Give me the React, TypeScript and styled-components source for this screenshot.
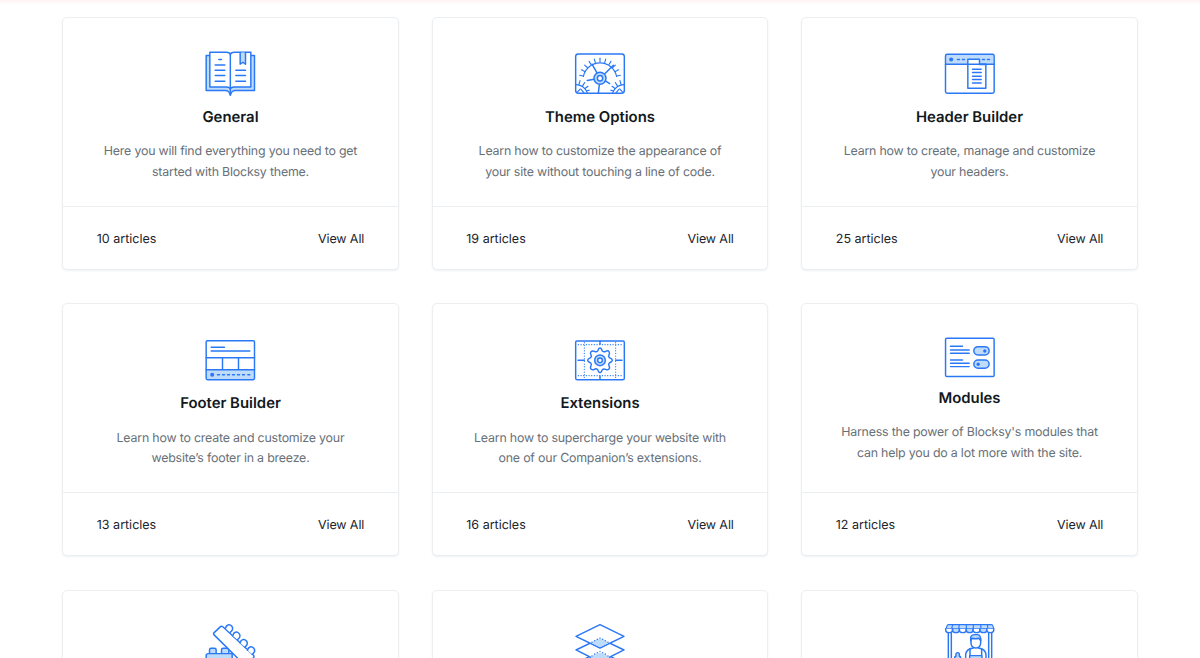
import React from "react";
import styled, { createGlobalStyle } from "styled-components";

const Global = createGlobalStyle`
  *, *::before, *::after { box-sizing: border-box; }
  body {
    margin: 0;
    background: #fff;
    font-family: Inter, "Liberation Sans", sans-serif;
    text-rendering: geometricPrecision;
    overflow: hidden;
  }
`;

const Page = styled.main`
  height: 658px;
  overflow: hidden;
  background: linear-gradient(180deg, #fff2f4 0, #fff7f9 2px, #fff 4px);
  padding: 17px 62.4px 0;
`;

const Grid = styled.div`
  display: grid;
  grid-template-columns: repeat(3, 1fr);
  grid-auto-rows: 253px;
  gap: 33.3px;
`;

const Card = styled.article`
  display: flex;
  flex-direction: column;
  background: #fff;
  border: 1px solid #eceff2;
  border-radius: 5px;
  box-shadow: 0 1px 2px rgba(40, 60, 90, 0.08);
`;

const CardBody = styled.div`
  flex: 1;
  display: flex;
  flex-direction: column;
  align-items: center;
  padding-top: 33px;
  text-align: center;
`;

const Icon = styled.svg`
  display: block;
  flex: none;
  overflow: visible;
  fill: none;
  stroke: #2a78f5;
  stroke-width: 4.4;
  stroke-linecap: round;
  stroke-linejoin: round;

  .tint { fill: #bfdbfa; }
  .paper { fill: #fff; }
  .dot { fill: #2a78f5; stroke: none; }
  .soft { stroke: none; fill: #bfdbfa; }
  .fine { stroke-width: 3.4; }
`;

const Title = styled.h2`
  margin: 9.8px 0 0;
  font-size: 14.9px;
  line-height: 20px;
  font-weight: 600;
  letter-spacing: 0;
  color: #111820;
`;

const Description = styled.p`
  margin: 14.5px 0 0;
  font-size: 12.4px;
  line-height: 20.4px;
  letter-spacing: -0.2px;
  color: #687078;
  white-space: pre-line;
`;

const CardFooter = styled.footer`
  display: flex;
  align-items: center;
  justify-content: space-between;
  height: 63px;
  padding: 2px 33.4px 0;
  border-top: 1px solid #eceff2;
  font-size: 12.5px;
  color: #1b232b;
`;

const Count = styled.span``;
const ViewAll = styled.a`
  letter-spacing: -0.12px;
  cursor: pointer;
`;

const BookIcon = () => (
  <Icon width="52" height="46" viewBox="42.5 33.3 156 138">
    <path className="tint" d="M60 47H49v105h57c9 0 12 3 15.500 14 3.500-11 6.500-14 15.500-14h57V47h-11" />
    <path className="paper" d="M60 37h49c8 0 12 3 12.500 8 .5-5 4.500-8 12.500-8h49v104h-49c-8 0-12 3-12.500 7-.5-4-4.500-7-12.500-7H60z" />
    <path d="M121.500 45v119" />
    <path className="tint" d="M151 38v35l8-6 8 6V38" />
    <path d="M87 59h8M76 75h29M76 91h29M76 107h29M76 124h29M138 91h29M138 107h29M138 124h29" />
  </Icon>
);

const gaugeTicks = Array.from({ length: 11 }, (_, i) => {
  const a = ((190 + i * 16) * Math.PI) / 180;
  return (
    <path
      key={i}
      className="fine"
      d={`M${120 + 51 * Math.cos(a)} ${117 + 51 * Math.sin(a)}L${120 + 62 * Math.cos(a)} ${117 + 62 * Math.sin(a)}`}
    />
  );
});

const ThemeOptionsIcon = () => (
  <Icon width="52" height="46" viewBox="42 33.300 156 138">
    <rect x="47" y="42" width="146" height="118" rx="8" />
    <path className="fine" d="M70 110a51 51 0 0 1 100 0" />
    {gaugeTicks}
    <path d="M111 99L96 73M133 103l27-27M102 118l-20 4M137 124l12 7M118 135l-3 24" />
    <circle className="tint" cx="120" cy="115" r="18" />
    <circle className="paper" cx="120" cy="115" r="8" />
    <path className="fine" d="M49 134c16 1 27 9 33 25M191 134c-16 1-27 9-33 25M57 133l3-11M68 138l6-10M76 145l8-6M80 153l8-2M183 133l-3-11M172 138l-6-10M164 145l-8-6M160 153l-8-2M61 147l-9 10M64 149l8 10M179 147l9 10M176 149l-8 10" />
  </Icon>
);

const HeaderIcon = () => (
  <Icon width="52" height="46" viewBox="41.500 33.300 156 138">
    <path className="soft" d="M48 43h142v30H48z" />
    <rect x="46" y="43" width="146" height="117" rx="5" />
    <path d="M46 73h146" />
    <circle className="dot" cx="63" cy="59" r="6" />
    <path d="M82 59h6M97 59h6M157 59h6M172 59h6" />
    <path className="paper" d="M113 58h35v16h19v71h-54z" />
    <path d="M113 73h54M127 88h26M127 98h26M127 109h26M127 119h26M127 129h26" />
  </Icon>
);

const FooterIcon = () => (
  <Icon width="52" height="46" viewBox="42.500 27 156 138">
    <path className="soft" d="M50 125h143v29H50z" />
    <rect x="49" y="38" width="145" height="117" rx="4" />
    <path d="M64 58h40M64 69h116M49 89h145M49 125h145M98 89v36M146 89v36" />
    <circle className="dot" cx="67" cy="140" r="6" />
    <path d="M83 140h6M98 140h6M113 140h6M128 140h6M143 140h6M158 140h6M174 140h6" />
  </Icon>
);

const ExtensionsIcon = () => (
  <Icon width="52" height="46" viewBox="42 27 156 138">
    <rect x="47" y="39" width="146" height="116" rx="4" />
    <path className="fine" d="M55 50h131M55 143h131M73 44v106M167 44v106" strokeDasharray="0.500 7.500" />
    <path d="M120 40v9M120 144v10M54 97h19M167 97h19" />
    <path
      d="M113 69c2-3 2-9 7-9s5 6 7 9c3 3 7 3 10 1 4-2 8-2 10 1s2 6 0 10c-2 3-1 6 1 8 3 2 9 3 9 8s-6 6-9 8c-2 2-3 5-1 8 2 4 3 7 0 10s-6 3-10 1-7-2-10 1c-2 3-2 9-7 9s-5-6-7-9c-3-3-7-3-10-1s-7 2-10-1-2-6 0-10c2-3 1-6-1-8-3-2-9-3-9-8s6-6 9-8c2-2 3-5 1-8-2-4-3-7 0-10s6-3 10-1 7 2 10-1z"
    />
    <circle className="tint" cx="120" cy="97" r="16" />
    <circle className="paper" cx="120" cy="97" r="7" />
  </Icon>
);

const ModulesIcon = () => (
  <Icon width="52" height="40.600" viewBox="41.500 27 156 122">
    <rect x="46" y="31" width="146" height="115" rx="4" />
    <path d="M61 55h36M61 66h56M61 76h56M61 96h36M61 106h56M61 116h56" />
    <rect className="tint" x="131" y="56" width="46" height="25" rx="12.500" />
    <rect className="tint" x="131" y="96" width="46" height="25" rx="12.500" />
    <circle className="dot" cx="164" cy="69" r="5" />
    <circle className="dot" cx="144" cy="109" r="5" />
  </Icon>
);

const BlocksIcon = () => (
  <Icon width="52" height="46" viewBox="42.500 41.100 156 138">
    <path className="tint" d="M49 178v-42q0-6 6-6h72v48zM59 129v-10q0-5 5-5h10q5 0 5 5v10M95 129v-10q0-5 5-5h12q5 0 5 5v10" />
    <path className="paper" d="M72 73q-2-3 1-6l19-18q4-3 8 1l91 85q3 4 0 7l-21 28z" />
    <path className="paper" d="M107 54c2-11 12-14 19-6 5 6 2 14-5 18M129 76c2-11 12-14 19-6 5 6 2 14-5 18M151 98c2-11 12-14 19-6 5 6 2 14-5 18M173 120c2-11 12-14 19-6 5 6 2 14-5 18" />
  </Icon>
);

const LayersIcon = () => (
  <Icon width="52" height="46" viewBox="42 41.100 156 138">
    <path className="paper" d="M120 123l72 36-72 35-72-35z" />
    <path className="paper" d="M120 84l72 35-72 36-72-36z" />
    <path className="soft" d="M92 142c7-8 17-14 28-14s21 6 28 14l-28 14z" />
    <path d="M96 137l0 0M104 131l0 0M112 127l0 0M120 124l0 0M128 127l0 0M136 131l0 0M144 137l0 0" />
    <path className="paper" d="M120 43l72 35-72 35-72-35z" />
    <path className="soft" d="M94 98c7-8 16-12 26-12s19 4 26 12l-26 13z" />
    <path d="M96 96l0 0M104 91l0 0M112 87l0 0M120 84l0 0M128 87l0 0M136 91l0 0M144 96l0 0" />
  </Icon>
);

const ShopIcon = () => (
  <Icon width="52" height="46" viewBox="41 41.100 156 138">
    <path d="M54 67v111M63 67v111M175 67v111M184 67v111" />
    <path className="soft" d="M50 44h135l5 9H47z" />
    <path className="fine" d="M55 43h128q4 0 5 5l2 7H47l3-8q1-4 5-4zM67 43l-3 12M87 43l-2 12M108 43v12M129 43v12M151 43l1 12M171 43l2 12" />
    {[0, 1, 2, 3, 4, 5, 6].map((i) => (
      <path
        key={i}
        className={i % 2 ? "tint" : "paper"}
        d={`M${46 + i * 20.6} 55v3q0 9 10.300 9t10.300-9v-3`}
      />
    ))}
    <path className="paper" d="M122 86v11q0 15 14.500 16 14.500-1 14.500-16V86" />
    <path className="tint" d="M121 91V82q1-9 13-9h8q10 1 9 18l-6-7q-10 3-19 0z" />
    <path d="M129 113c-15 2-22 7-23 20v46M144 113c15 2 22 7 23 20v46" />
    <path className="tint" d="M118 180v-44h37v44M119 117v19M154 117v19M72 180c0-18 2-24 5-30l-4-9q0-3 4-3v-8q5-6 10 0v8q4 0 4 3l-4 9c3 6 5 12 5 30" />
  </Icon>
);

interface Topic {
  title: string;
  text: string;
  count: number;
  icon: React.ComponentType;
}

const topics: Topic[] = [
  { title: "General", text: "Here you will find everything you need to get\nstarted with Blocksy theme.", count: 10, icon: BookIcon },
  { title: "Theme Options", text: "Learn how to customize the appearance of\nyour site without touching a line of code.", count: 19, icon: ThemeOptionsIcon },
  { title: "Header Builder", text: "Learn how to create, manage and customize\nyour headers.", count: 25, icon: HeaderIcon },
  { title: "Footer Builder", text: "Learn how to create and customize your\nwebsite’s footer in a breeze.", count: 13, icon: FooterIcon },
  { title: "Extensions", text: "Learn how to supercharge your website with\none of our Companion’s extensions.", count: 16, icon: ExtensionsIcon },
  { title: "Modules", text: "Harness the power of Blocksy's modules that\ncan help you do a lot more with the site.", count: 12, icon: ModulesIcon },
];

const upcoming = [BlocksIcon, LayersIcon, ShopIcon];

export default function App() {
  return (
    <>
      <Global />
      <Page>
        <Grid>
          {topics.map(({ title, text, count, icon: TopicIcon }) => (
            <Card key={title}>
              <CardBody>
                <TopicIcon />
                <Title>{title}</Title>
                <Description>{text}</Description>
              </CardBody>
              <CardFooter>
                <Count>{count} articles</Count>
                <ViewAll>View All</ViewAll>
              </CardFooter>
            </Card>
          ))}
          {upcoming.map((TopicIcon, i) => (
            <Card key={i}>
              <CardBody>
                <TopicIcon />
              </CardBody>
            </Card>
          ))}
        </Grid>
      </Page>
    </>
  );
}
